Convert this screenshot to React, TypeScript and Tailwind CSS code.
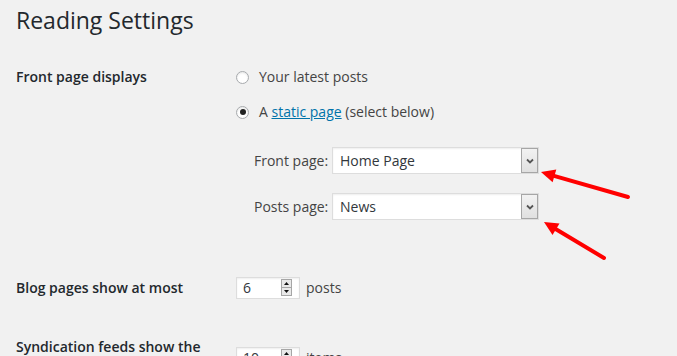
import React from "react"

function Radio({ checked }: { checked?: boolean }) {
  return (
    <span className="w-[13px] h-[13px] rounded-full border border-[#a7aaad] bg-white flex items-center justify-center shadow-[inset_0_1px_2px_rgba(0,0,0,0.1)]">
      {checked && <span className="w-[6px] h-[6px] rounded-full bg-[#222]" />}
    </span>
  )
}

function Select({ value }: { value: string }) {
  return (
    <div className="w-[207px] h-[27px] border border-[#ddd] bg-white flex items-stretch shadow-[inset_0_1px_2px_rgba(0,0,0,0.07)]">
      <span className="flex-1 pl-[7px] text-[14px] leading-[25px] text-[#32373c]">{value}</span>
      <span className="w-[17px] border border-[#a6a6a6] bg-gradient-to-b from-[#f2f2f2] to-[#e0e0e0] flex items-center justify-center">
        <svg width="8" height="6" viewBox="0 0 8 6">
          <polyline points="1,1.5 4,4.5 7,1.5" fill="none" stroke="#555" strokeWidth="1.8" />
        </svg>
      </span>
    </div>
  )
}

function NumberInput({ value }: { value: string }) {
  return (
    <div className="w-[64px] h-[22px] border border-[#ddd] bg-white flex items-start shadow-[inset_0_1px_2px_rgba(0,0,0,0.07)]">
      <span className="flex-1 pl-[6px] text-[14px] leading-[20px] text-[#32373c]">{value}</span>
      <span className="mt-[1px] mr-[7px] w-[11px] h-[17px] border border-[#a6a6a6] bg-[#e9e9e9] flex flex-col">
        <span className="flex-1 flex items-center justify-center border-b border-[#a6a6a6]">
          <svg width="5" height="3" viewBox="0 0 5 3"><polygon points="0,3 2.5,0 5,3" fill="#111" /></svg>
        </span>
        <span className="flex-1 flex items-center justify-center">
          <svg width="5" height="3" viewBox="0 0 5 3"><polygon points="0,0 2.5,3 5,0" fill="#111" /></svg>
        </span>
      </span>
    </div>
  )
}

export default function App() {
  return (
    <div className="relative w-[677px] h-[356px] overflow-hidden bg-[#f1f1f1] px-4 font-['Open_Sans',sans-serif] text-[#444]">
      <h1 className="pt-[5px] text-[23px] leading-[30px] font-normal text-[#23282d]">Reading Settings</h1>

      {/* front page displays */}
      <div className="mt-[32px] flex items-start">
        <div className="w-[220px] text-[14px] leading-5 font-semibold text-[#23282d]">Front page displays</div>
        <div className="flex flex-col text-[14px] leading-5">
          <label className="flex items-center gap-[10px] h-5">
            <Radio />
            <span>Your latest posts</span>
          </label>
          <label className="mt-[15px] flex items-center gap-[10px] h-5">
            <Radio checked />
            <span>
              A <a className="text-[#0073aa] underline">static page</a> (select below)
            </span>
          </label>
          <div className="mt-[25px] pl-[18px] flex flex-col gap-[19px]">
            <div className="flex items-center">
              <span className="w-[78px]">Front page:</span>
              <Select value="Home Page" />
            </div>
            <div className="flex items-center">
              <span className="w-[78px]">Posts page:</span>
              <Select value="News" />
            </div>
          </div>
        </div>
      </div>

      {/* blog pages */}
      <div className="mt-[57px] flex items-center">
        <div className="w-[220px] text-[14px] leading-5 font-semibold text-[#23282d]">Blog pages show at most</div>
        <div className="flex items-center text-[14px] leading-5">
          <NumberInput value="6" />
          <span className="ml-[6px]">posts</span>
        </div>
      </div>

      {/* syndication */}
      <div className="mt-[38px] flex items-start">
        <div className="w-[200px] mr-[20px] text-[14px] leading-5 font-semibold text-[#23282d]">Syndication feeds show the most recent</div>
        <div className="mt-[10px] flex items-center text-[14px] leading-5">
          <NumberInput value="10" />
          <span className="ml-[6px]">items</span>
        </div>
      </div>

      {/* annotation arrows */}
      <svg className="absolute inset-0 pointer-events-none" width="677" height="356">
        <line x1="628" y1="197" x2="554" y2="175.8" stroke="#f00" strokeWidth="4" strokeLinecap="round" />
        <polygon points="541,172 556.3,169.6 552.6,182.2" fill="#f00" />
        <line x1="604" y1="258" x2="556" y2="229.2" stroke="#f00" strokeWidth="4" strokeLinecap="round" />
        <polygon points="544,222 559.5,223.6 552.5,235" fill="#f00" />
      </svg>
    </div>
  )
}
